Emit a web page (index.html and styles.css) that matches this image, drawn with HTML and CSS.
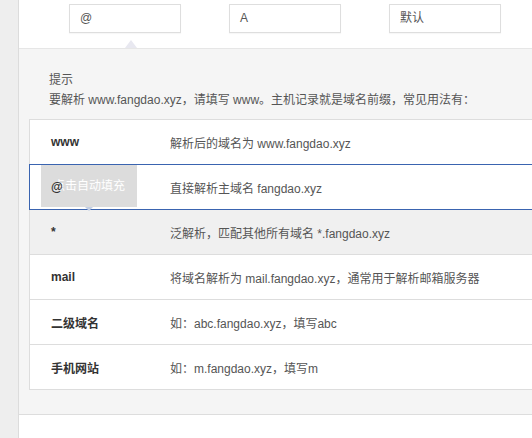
FILE: index.html
```html
<!DOCTYPE html>
<html lang="zh-CN">
<head>
<meta charset="utf-8">
<title>主机记录</title>
<link rel="stylesheet" href="styles.css">
</head>
<body>
<div class="page">
  <div class="side"></div>
  <div class="panel">
    <div class="fields">
      <div class="field">@</div>
      <div class="field">A</div>
      <div class="field">默认</div>
      <span class="pointer"></span>
    </div>
    <div class="help">
      <div class="hint">
        <div>提示</div>
        <div>要解析 www.fangdao.xyz，请填写 www。主机记录就是域名前缀，常见用法有：</div>
      </div>
      <div class="table">
        <div class="row"><div class="key">www</div><div class="val">解析后的域名为 www.fangdao.xyz</div></div>
        <div class="row active">
          <div class="key">@</div><div class="val">直接解析主域名 fangdao.xyz</div>
          <div class="tip">点击自动填充</div>
        </div>
        <div class="row hover"><div class="key">*</div><div class="val">泛解析，匹配其他所有域名 *.fangdao.xyz</div></div>
        <div class="row"><div class="key">mail</div><div class="val">将域名解析为 mail.fangdao.xyz，通常用于解析邮箱服务器</div></div>
        <div class="row"><div class="key">二级域名</div><div class="val">如：abc.fangdao.xyz，填写abc</div></div>
        <div class="row"><div class="key">手机网站</div><div class="val">如：m.fangdao.xyz，填写m</div></div>
      </div>
    </div>
    <div class="foot"></div>
  </div>
</div>
</body>
</html>
```

FILE: styles.css
```css
html, body {
  margin: 0;
  padding: 0;
  overflow: hidden;
}
body {
  background: #eeeeee;
  font-family: "Liberation Sans", "Noto Sans CJK SC", sans-serif;
  font-size: 12px;
  color: #555;
  width: 532px;
  height: 438px;
}
.page {
  display: flex;
  height: 438px;
}
.side {
  width: 18px;
  flex: none;
  background: #eeeeee;
}
.panel {
  flex: 1;
  min-width: 0;
  overflow: hidden;
  border-left: 1px solid #dcdcdc;
  background: #fff;
  display: flex;
  flex-direction: column;
}
.fields {
  position: relative;
  height: 49px;
  box-sizing: border-box;
  border-bottom: 1px solid #e6e6e6;
  display: flex;
  gap: 48px;
  padding: 4px 0 0 50px;
}
.field {
  width: 112px;
  height: 29px;
  box-sizing: border-box;
  border: 1px solid #dedede;
  box-shadow: 0 1px 1px rgba(0,0,0,0.03);
  padding-left: 10px;
  line-height: 27px;
  color: #555;
  background: #fff;
}
.pointer {
  position: absolute;
  left: 106px;
  bottom: 0;
  width: 0;
  height: 0;
  border-left: 6px solid transparent;
  border-right: 6px solid transparent;
  border-bottom: 8px solid #e8e8f0;
}
.help {
  background: #f5f5f5;
  padding: 21px 0 24px 10px;
  border-bottom: 1px solid #dddddd;
}
.hint {
  padding-left: 20px;
  line-height: 20px;
  color: #555;
  margin-bottom: 9px;
}
.table {
  border-top: 1px solid #dddddd;
  border-left: 1px solid #dddddd;
  background: #fff;
}
.row {
  position: relative;
  display: flex;
  align-items: center;
  height: 45px;
  box-sizing: border-box;
  border-bottom: 1px solid #dddddd;
  background: #fff;
}
.row.hover {
  background: #f0f0f0;
}
.row.active {
  border-bottom-color: #3a64b0;
  box-shadow: 0 -1px 0 #3a64b0, -1px 0 0 #3a64b0, -1px -1px 0 #3a64b0;
  z-index: 1;
}
.key {
  position: relative;
  z-index: 2;
  width: 140px;
  flex: none;
  padding-left: 21px;
  box-sizing: border-box;
  font-weight: bold;
  color: #333;
}
.val {
  color: #555;
  white-space: nowrap;
}
.tip {
  position: absolute;
  left: 11px;
  top: 0;
  width: 96px;
  height: 42px;
  background: #dcdcdc;
  color: #fff;
  text-align: center;
  line-height: 42px;
  z-index: 1;
}
.tip::after {
  content: "";
  position: absolute;
  left: 44px;
  top: 42px;
  border-left: 4px solid transparent;
  border-right: 4px solid transparent;
  border-top: 4px solid #c3cfe4;
}
.foot {
  flex: 1;
  background: #fff;
}
```
